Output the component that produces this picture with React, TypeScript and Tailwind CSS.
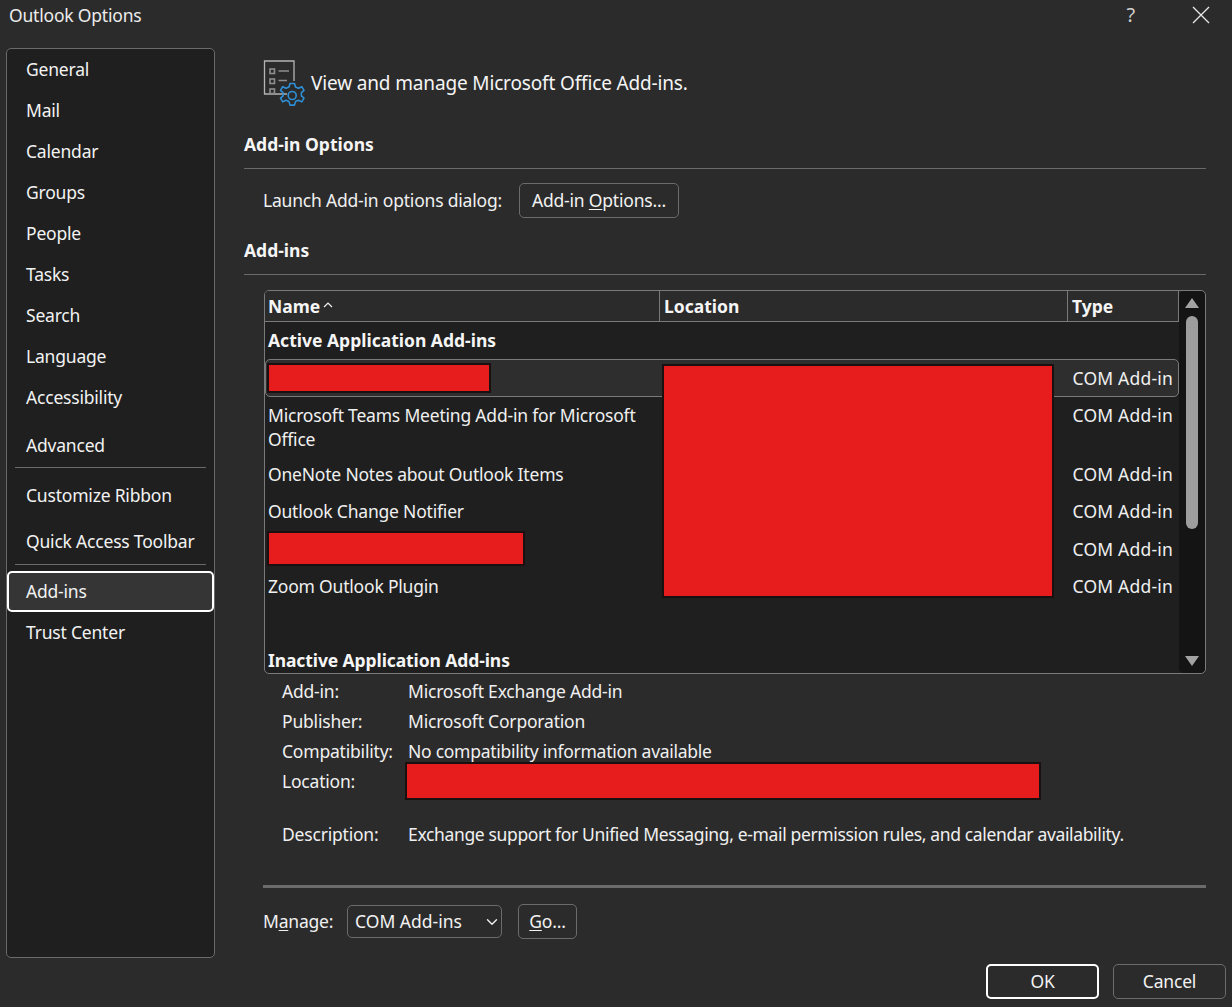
import { ChevronDown } from 'lucide-react';
import type { ReactNode } from 'react';

const FONT = "font-['Noto_Sans',sans-serif]";

const addIns = [
  { label: 'Microsoft Teams Meeting Add-in for Microsoft Office', height: 'h-[60px] pt-[6px]', textTop: '' },
  { label: 'OneNote Notes about Outlook Items', height: 'h-[37px]', textTop: 'pt-[5px]' },
  { label: 'Outlook Change Notifier', height: 'h-[37px]', textTop: 'pt-[5px]' },
  { label: '', height: 'h-[36px]', textTop: '', redacted: 'w-[258px]' },
  { label: 'Zoom Outlook Plugin', height: 'h-[38px]', textTop: 'pt-[7px]' },
];

const details = [
  { label: 'Add-in:', value: 'Microsoft Exchange Add-in', height: 'h-[30px]' },
  { label: 'Publisher:', value: 'Microsoft Corporation', height: 'h-[30px]' },
  { label: 'Compatibility:', value: 'No compatibility information available', height: 'h-[30px]' },
];

function Redaction({ className }: { className: string }) {
  return <div className={`border-2 border-[#1a1010] bg-[#e71c1c] ${className}`} />;
}

function NavItem({ label, active, className = '' }: { label: string; active?: boolean; className?: string }) {
  return (
    <div
      className={`flex items-center rounded-[5px] pl-[17px] ${className} ${
        active ? 'border-2 border-white bg-[#353535]' : 'border-2 border-transparent'
      }`}
    >
      {label}
    </div>
  );
}

function Sidebar() {
  return (
    <nav className="ml-[6px] mt-[18px] h-[910px] w-[209px] shrink-0 rounded-[5px] border border-[#6a6a6a] bg-[#1f1f1f] text-[#f2f2f2]">
      {['General', 'Mail', 'Calendar', 'Groups', 'People', 'Tasks', 'Search', 'Language', 'Accessibility'].map(label => (
        <NavItem key={label} label={label} className="h-[41px]" />
      ))}
      <NavItem label="Advanced" className="mt-[7px] h-[41px]" />
      <div className="mx-[8px] mt-[1px] h-px bg-[#6a6a6a]" />
      <NavItem label="Customize Ribbon" className="mt-[7px] h-[41px]" />
      <NavItem label="Quick Access Toolbar" className="mt-[5px] h-[41px]" />
      <div className="mx-[8px] mt-[2px] h-px bg-[#6a6a6a]" />
      <NavItem label="Add-ins" active className="mt-[6px] h-[41px]" />
      <NavItem label="Trust Center" className="h-[41px]" />
    </nav>
  );
}

function OptionsIcon() {
  return (
    <svg width="42" height="46" viewBox="0 0 42 46" fill="none" className="shrink-0">
      <path d="M24 34H1.5V1H31V21" stroke="#b4b4b4" strokeWidth="1.3" />
      <g stroke="#8e8e8e" strokeWidth="1.6">
        <rect x="7" y="9" width="4.5" height="4.5" />
        <rect x="7" y="19" width="4.5" height="4.5" />
        <rect x="7" y="29" width="4.5" height="4.5" />
      </g>
      <path d="M15.5 11H26M15.5 20.5H24" stroke="#8e8e8e" strokeWidth="1.3" />
      <path
        d="M27 23.500h4.500l1 3.500 3 1.300 3.300-1.600 2.200 3.700-2.600 2.300v3.200l2.600 2.300-2.200 3.700-3.300-1.600-3 1.300-1 3.500H27l-1-3.500-3-1.300-3.300 1.600-2.200-3.700 2.600-2.300v-3.200l-2.600-2.300 2.200-3.700 3.300 1.600 3-1.300z"
        stroke="#2f8fd6"
        strokeWidth="1.6"
        strokeLinejoin="round"
      />
      <circle cx="29.200" cy="35.500" r="4" stroke="#2f8fd6" strokeWidth="1.600" />
    </svg>
  );
}

function SectionHeading({ children }: { children: ReactNode }) {
  return (
    <div className="flex h-[24px] items-center pb-[2px] font-bold tracking-normal text-[#f5f5f5]">{children}</div>
  );
}

function OutlineButton({ className, children }: { className: string; children: ReactNode }) {
  return (
    <button
      type="button"
      className={`flex shrink-0 items-center justify-center rounded-[5px] border border-[#6b6b6b] text-[#f2f2f2] ${className}`}
    >
      {children}
    </button>
  );
}

function Triangle({ down }: { down?: boolean }) {
  return (
    <svg width="14" height="10" viewBox="0 0 14 10" className="shrink-0">
      <path d={down ? 'M0 0H14L7 10Z' : 'M7 0L14 10H0Z'} fill="#a3a3a3" />
    </svg>
  );
}

function AddInTable() {
  return (
    <div className="relative ml-[20px] flex h-[384px] w-[942px] overflow-hidden rounded-[5px] border border-[#7a7a7a] bg-[#1f1f1f] text-[#f0f0f0]">
      <div className="min-w-0 flex-1">
        <div className="flex h-[31px] border-b border-[#7a7a7a] bg-[#2b2b2b] font-bold tracking-normal text-[#f5f5f5]">
          <div className="flex w-[395px] items-center gap-[3px] border-r border-[#7a7a7a] pl-[3px]">
            Name
            <svg width="10" height="6" viewBox="0 0 10 6" fill="none" className="mb-[3px]">
              <path d="M1 5L5 1L9 5" stroke="#f0f0f0" strokeWidth="1.200" />
            </svg>
          </div>
          <div className="flex w-[408px] items-center border-r border-[#7a7a7a] pl-[4px]">Location</div>
          <div className="flex flex-1 items-center border-r border-[#7a7a7a] pl-[4px]">Type</div>
        </div>

        <div className="flex h-[37px] items-center pl-[3px] font-bold tracking-normal text-[#f5f5f5]">Active Application Add-ins</div>

        <div className="flex h-[38px] items-center justify-between rounded-[5px] border border-[#7a7a7a] bg-[#2e2e2e] pl-[1px] pr-[5px]">
          <Redaction className="h-[30px] w-[224px]" />
          <span className="tracking-[0.200px]">COM Add-in</span>
        </div>

        {addIns.map((row, index) => (
          <div key={index} className={`flex items-start justify-between pr-[6px] ${row.height}`}>
            {row.redacted ? (
              <Redaction className={`ml-[2px] h-[35px] ${row.redacted}`} />
            ) : (
              <span className={`w-[390px] pl-[3px] leading-[24px] ${row.textTop}`}>{row.label}</span>
            )}
            <span className={`leading-[24px] tracking-[0.200px] ${row.redacted ? 'self-center' : row.textTop}`}>COM Add-in</span>
          </div>
        ))}

        <div className="mt-[43px] flex h-[24px] items-center pl-[3px] font-bold tracking-[-0.100px] text-[#f5f5f5]">Inactive Application Add-ins</div>
      </div>

      <div className="flex h-full w-[26px] shrink-0 flex-col items-center rounded-[5px] bg-[#141414] py-[7px]">
        <Triangle />
        <div className="mt-[8px] h-[213px] w-[12px] rounded-[6px] bg-[#9d9d9d]" />
        <div className="flex-1" />
        <Triangle down />
      </div>

      {/* covers the location column */}
      <Redaction className="absolute left-[397px] top-[73px] h-[234px] w-[392px]" />
    </div>
  );
}

function Details() {
  return (
    <div className="ml-[38px] mt-[2px] text-[#f0f0f0]">
      {details.map(row => (
        <div key={row.label} className={`flex items-center ${row.height}`}>
          <span className="w-[126px] shrink-0">{row.label}</span>
          <span className={row.label === 'Compatibility:' ? 'tracking-[-0.270px]' : ''}>{row.value}</span>
        </div>
      ))}
      <div className="flex h-[30px] items-center">
        <span className="w-[123px] shrink-0">Location:</span>
        <Redaction className="h-[38px] w-[636px]" />
      </div>
      <div className="mt-[23px] flex h-[30px] items-center">
        <span className="w-[126px] shrink-0">Description:</span>
        <span className="tracking-[-0.350px]">Exchange support for Unified Messaging, e-mail permission rules, and calendar availability.</span>
      </div>
    </div>
  );
}

export default function App() {
  return (
    <div className={`flex h-[1007px] w-[1232px] flex-col overflow-hidden bg-[#2b2b2b] text-[17.500px] tracking-[-0.200px] text-[#f0f0f0] ${FONT}`}>
      <header className="flex h-[30px] shrink-0 items-center justify-between pl-[9px] pr-[22px]">
        <span className="text-[#ececec]">Outlook Options</span>
        <div className="flex items-center gap-[57px] text-[#cfcfcf]">
          <span className="text-[20px]">?</span>
          <svg width="18" height="18" viewBox="0 0 18 18" fill="none">
            <path d="M1 1L17 17M17 1L1 17" stroke="#e8e8e8" strokeWidth="1.300" />
          </svg>
        </div>
      </header>

      <div className="flex min-h-0 flex-1">
        <Sidebar />

        <main className="ml-[29px] w-[962px] pt-[30px]">
          <div className="ml-[19px] flex h-[46px] items-center gap-[6px] text-[19px] tracking-[-0.150px] text-[#f5f5f5]">
            <OptionsIcon />
            View and manage Microsoft Office Add-ins.
          </div>

          <div className="mt-[27px]">
            <SectionHeading>Add-in Options</SectionHeading>
          </div>
          <div className="mt-[11px] h-px bg-[#6a6a6a]" />
          <div className="ml-[19px] mt-[14px] flex items-center gap-[17px]">
            Launch Add-in options dialog:
            <OutlineButton className="h-[35px] w-[160px]">
              <span>
                Add-in <u className="underline-offset-2">O</u>ptions...
              </span>
            </OutlineButton>
          </div>

          <div className="mt-[21px]">
            <SectionHeading>Add-ins</SectionHeading>
          </div>
          <div className="mt-[11px] h-px bg-[#6a6a6a]" />
          <div className="mt-[15px]">
            <AddInTable />
          </div>

          <Details />

          <div className="ml-[19px] mt-[36px] h-[3px] bg-[#6b6b6b]" />

          <div className="ml-[19px] mt-[16px] flex items-center">
            <span className="w-[84px] shrink-0">
              M<u className="underline-offset-2">a</u>nage:
            </span>
            <div className="flex h-[33px] w-[155px] items-center justify-between rounded-[5px] border border-[#6b6b6b] pl-[7px] text-[#f2f2f2]">
              <span className="tracking-normal">COM Add-ins</span>
              <ChevronDown size={18} strokeWidth={1.800} />
            </div>
            <OutlineButton className="ml-[16px] h-[35px] w-[59px]">
              <span>
                <u className="underline-offset-2">G</u>o...
              </span>
            </OutlineButton>
          </div>

          <div className="mr-[-20px] mt-[25px] flex justify-end gap-[14px]">
            <OutlineButton className="h-[35px] w-[113px] border-2 border-white">OK</OutlineButton>
            <OutlineButton className="h-[35px] w-[113px]">Cancel</OutlineButton>
          </div>
        </main>
      </div>
    </div>
  );
}
